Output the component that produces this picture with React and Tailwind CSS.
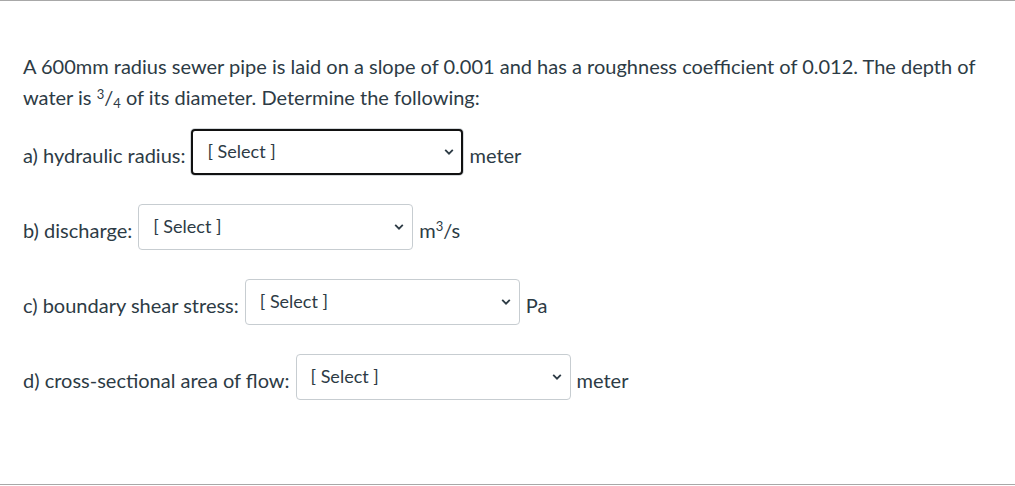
import { useState } from 'react';

const Chevron = () => (
  <svg width="10" height="7" viewBox="0 0 10 7" className="pointer-events-none absolute right-[9px] top-1/2 -translate-y-1/2">
    <path d="M1.2 1.4 L5 5.2 L8.8 1.4" fill="none" stroke="#2d3b45" strokeWidth="1.8" />
  </svg>
);

const AnswerSelect = ({ focused }) => {
  const [value, setValue] = useState('');
  return (
    <span className="relative mx-[6px] inline-block">
      <select
        value={value}
        onChange={(e) => setValue(e.target.value)}
        className={`h-[46px] appearance-none rounded-[4px] bg-white pb-[1px] pl-[14px] text-[18px] text-[#2d3b45] outline-none ${
          focused ? 'w-[272px] border-2 border-[#111] shadow-[0_0_0_1px_#d5d9dc]' : 'w-[275px] border border-[#c7cdd1]'
        }`}
      >
        <option value="">[ Select ]</option>
      </select>
      <Chevron />
    </span>
  );
};

const rows = [
  { label: 'a) hydraulic radius:', unit: 'meter', focused: true },
  { label: 'b) discharge:', unit: <>m<sup className="text-[13px] leading-none">3</sup>/s</> },
  { label: 'c) boundary shear stress:', unit: 'Pa' },
  { label: 'd) cross-sectional area of flow:', unit: 'meter' },
];

const App = () => {
  return (
    <div
      className="h-[485px] w-[1015px] border-y border-[#a8a8a8] bg-white pl-[23px] pr-[24px] text-[20px] text-[#2d3b45]"
      style={{ fontFamily: 'Lato, "Noto Sans", sans-serif' }}
    >
      <p className="mt-[50px] leading-[31px]">
        A 600mm radius sewer pipe is laid on a slope of 0.001 and has a roughness coefficient of 0.012. The depth of
        water is <sup className="text-[13px] leading-none">3</sup>/<sub className="text-[13px] leading-none">4</sub> of its diameter. Determine the following:
      </p>

      <div className="mt-[16px] flex flex-col gap-[29px]">
        {rows.map((row, i) => (
          <div key={i} className="flex items-center">
            <span className="mt-[5px]">{row.label}</span>
            <AnswerSelect focused={row.focused} />
            <span className="mt-[5px]">{row.unit}</span>
          </div>
        ))}
      </div>
    </div>
  );
};

export default App;
